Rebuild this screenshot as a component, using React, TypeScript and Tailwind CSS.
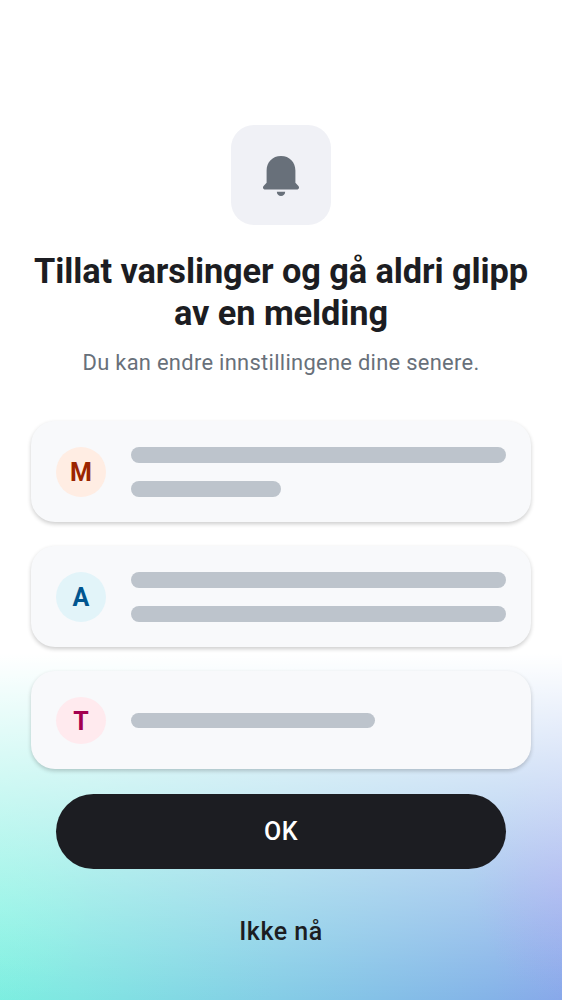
const cards = [
  { letter: 'M', avatar: 'h-[50px] pt-px bg-[#ffede3] text-[#9b2400]', height: 'h-[101px]', bars: ['w-full', 'w-[150px]'] },
  { letter: 'A', avatar: 'h-[50px] pt-px bg-[#e2f4f9] text-[#00558f]', height: 'h-[101px]', bars: ['w-full', 'w-full'] },
  { letter: 'T', avatar: 'h-[47px] pt-[2px] bg-[#ffeaee] text-[#a3004f]', height: 'h-[98px]', bars: ['w-[244px]'] },
];

function Bell() {
  return (
    <svg width="36" height="41" viewBox="0 0 36 41" fill="#68707a" aria-hidden="true">
      <path d="M18 0C9.4 0 3.6 6.4 3.6 14.4V26.8L.8 29.7C-.8 31.5.1 33.5 2.4 33.5H33.6C35.9 33.5 36.8 31.5 35.2 29.7L32.4 26.8V14.4C32.4 6.4 26.6 0 18 0Z" />
      <path d="M13.8 35.8H22.2C22.2 38.4 20.3 40 18 40S13.8 38.4 13.8 35.8Z" />
    </svg>
  );
}

export default function App() {
  return (
    <main className="flex h-[1000px] w-[562px] flex-col items-center overflow-hidden bg-white bg-[linear-gradient(180deg,#fff_0%,rgba(255,255,255,0)_100%),radial-gradient(90px_110px_at_100%_66%,rgba(150,150,236,0.45),rgba(150,150,236,0)),radial-gradient(90px_110px_at_0%_72%,rgba(128,246,226,0.4),rgba(128,246,226,0)),linear-gradient(92deg,#7cefe0_0%,#80e6e2_15%,#84cde6_50%,#84b3e8_88%,#88a8ea_100%)] bg-[length:100%_346px] bg-bottom bg-no-repeat pt-[125px] font-['Roboto',sans-serif] text-[#1c1d22]">
      <div className="flex size-[100px] shrink-0 items-center justify-center rounded-[23px] bg-[#f0f1f6] pt-[3px]">
        <Bell />
      </div>
      <h1 className="mt-[25px] w-[530px] text-center text-[34.375px] leading-[42px] font-bold tracking-[-0.1px] whitespace-nowrap">
        Tillat varslinger og gå aldri glipp
        <br />
        av en melding
      </h1>
      <p className="mt-[13px] text-center text-[21.9px] leading-[31px] tracking-[0.3px] text-[#68707a]">
        Du kan endre innstillingene dine senere.
      </p>
      <section className="mt-[43px] flex w-[500px] flex-col gap-6">
        {cards.map((card) => (
          <div
            key={card.letter}
            className={`flex ${card.height} items-center gap-[25px] rounded-[24px] bg-[#f8f9fb] px-[25px] shadow-[0_2px_4px_rgba(0,0,0,0.2)]`}
          >
            <div className={`flex w-[50px] shrink-0 items-center justify-center rounded-[50%] text-[25px] leading-none font-bold ${card.avatar}`}>
              {card.letter}
            </div>
            <div className="flex flex-1 flex-col gap-[18.6px] pt-px">
              {card.bars.map((width, i) => (
                <div key={i} className={`h-[15.7px] rounded-full bg-[#bdc4cc] ${width}`} />
              ))}
            </div>
          </div>
        ))}
      </section>
      <button className="mt-[25px] h-[75px] w-[450px] shrink-0 rounded-full bg-[#1c1d22] text-[25px] font-medium tracking-[0.5px] text-white">
        OK
      </button>
      <button className="mt-[25px] h-[75px] w-[450px] shrink-0 text-[25px] font-medium tracking-[0.5px]">Ikke nå</button>
    </main>
  );
}
